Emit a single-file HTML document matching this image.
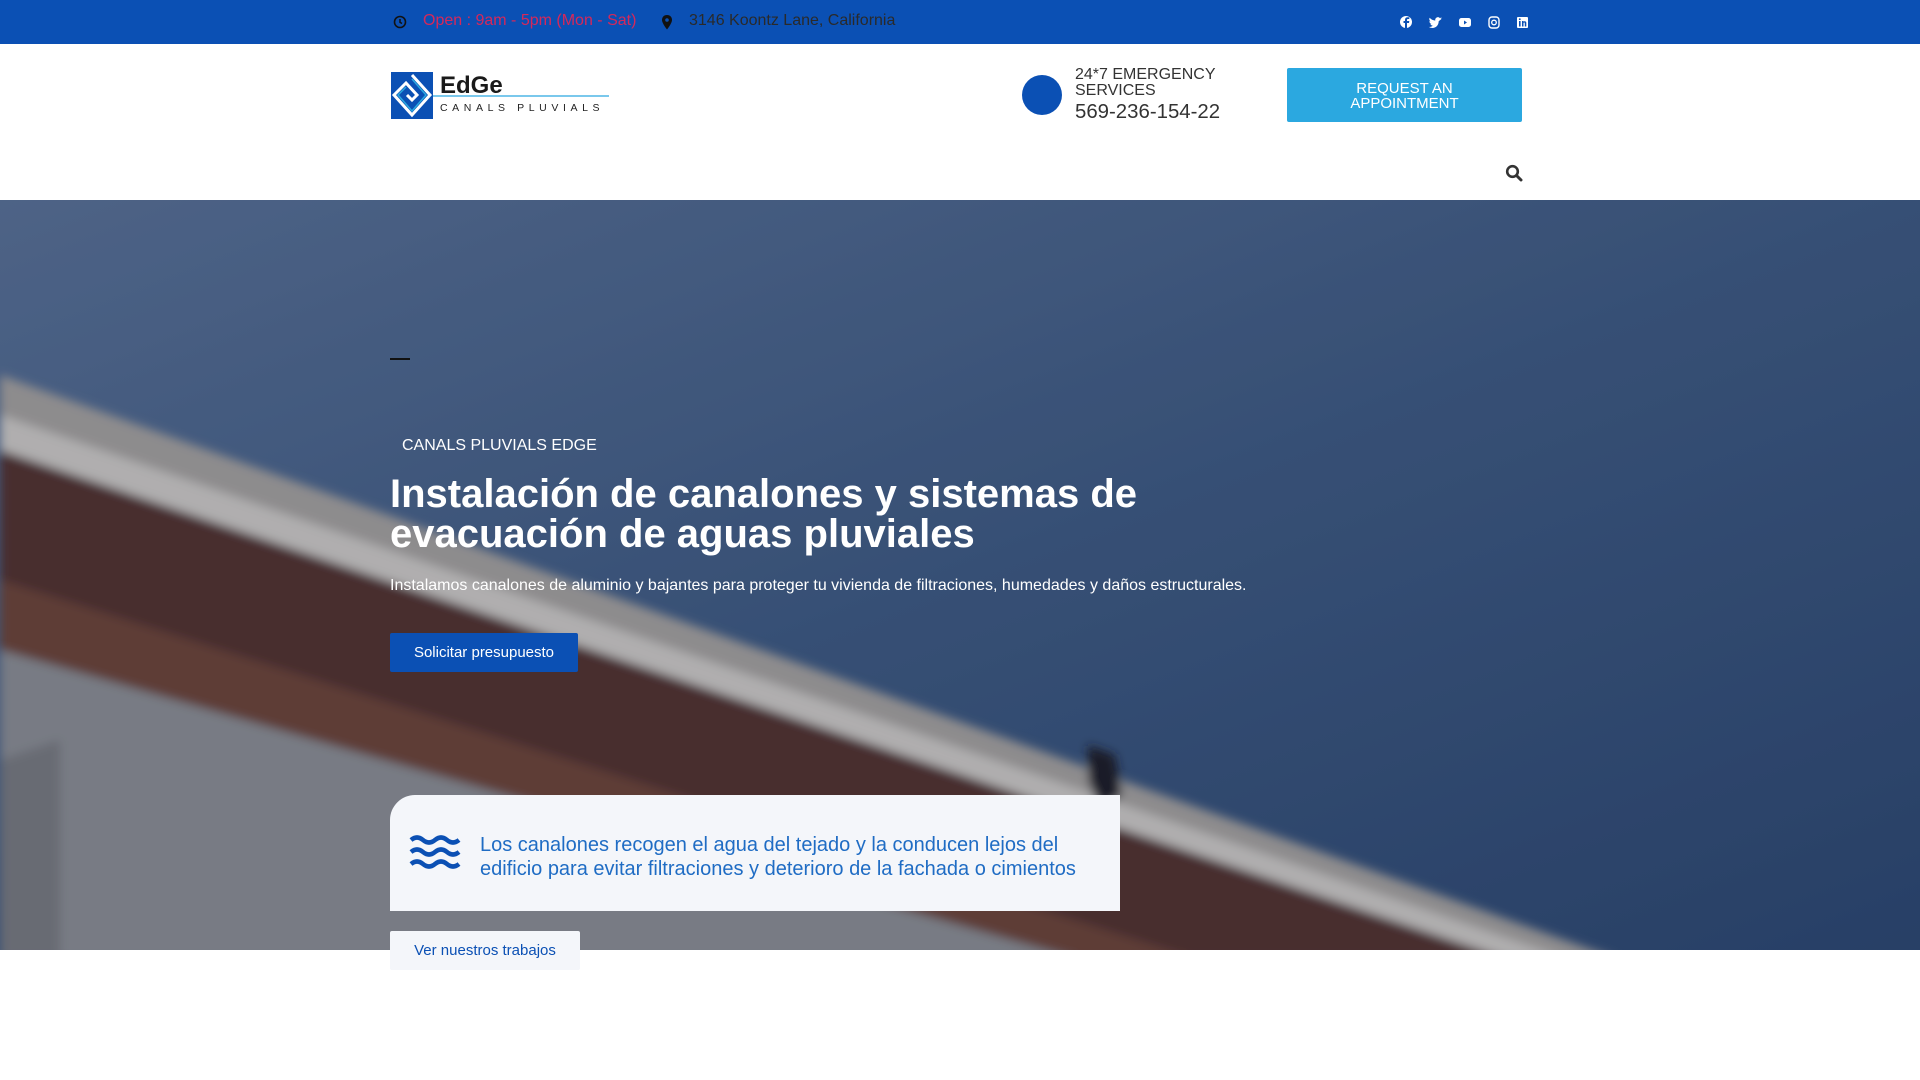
<!DOCTYPE html>
<html><head><meta charset="utf-8"><style>
*{margin:0;padding:0;box-sizing:border-box}
body{width:1920px;height:1080px;overflow:hidden;background:#fff;font-family:"Liberation Sans",sans-serif;position:relative}
.a{position:absolute;white-space:nowrap}
</style></head><body>
<div class="a" style="left:0;top:0;width:1920px;height:44px;background:#0b50b4"></div>
<svg class="a" style="left:393px;top:15px" width="14" height="14" viewBox="0 0 14 14"><circle cx="7" cy="7" r="5.5" fill="none" stroke="#111" stroke-width="1.6"/><path d="M7 4v3.3l2 1.2" fill="none" stroke="#111" stroke-width="1.5"/></svg>
<div class="a" style="left:423px;top:12px;font-size:16px;color:#d6285a">Open : 9am - 5pm (Mon - Sat)</div>
<svg class="a" style="left:661px;top:15px" width="12" height="15" viewBox="0 0 12 15"><path d="M6 0C2.7 0 1 2.4 1 5c0 3.3 5 9.5 5 9.5S11 8.3 11 5C11 2.4 9.3 0 6 0z" fill="#111"/><circle cx="6" cy="5" r="1.8" fill="#0b50b4"/></svg>
<div class="a" style="left:689px;top:12px;font-size:16px;color:#2a2a2a">3146 Koontz Lane, California</div>
<svg class="a" style="left:1400px;top:15px" width="140" height="14" viewBox="0 0 140 14">
<circle cx="6" cy="7" r="6" fill="#fff"/><path d="M7 14V8h2l.3-2H7V5c0-.6.2-1 1-1h1.3V2.2H7.6C6 2.2 5 3.1 5 4.8V6H3.5v2H5v6z" fill="#0b50b4"/>
<g transform="translate(12,0)"><path d="M30 3.5c-.5.2-1 .4-1.6.4.6-.3 1-.9 1.2-1.5-.5.3-1.1.5-1.7.7a2.7 2.7 0 0 0-4.6 2.5c-2.3-.1-4.3-1.2-5.6-2.8-.8 1.3-.3 2.8.8 3.6-.4 0-.9-.1-1.200-.3 0 1.3.9 2.4 2.2 2.7-.4.1-.8.1-1.2 0 .3 1.1 1.4 1.900 2.5 1.9-1.1.9-2.6 1.4-4 1.2 4 2.6 9.8.5 9.9-5.6z" fill="#fff"/></g>
<g transform="translate(8,0)"><rect x="51" y="3" width="12" height="9" rx="2.5" fill="#fff"/><path d="M56 5.5v4l3-2z" fill="#0b50b4"/></g>
<g transform="translate(13,0)"><rect x="76" y="2" width="10" height="11" rx="3" fill="none" stroke="#fff" stroke-width="1.4"/><circle cx="81" cy="7.5" r="2.3" fill="none" stroke="#fff" stroke-width="1.3"/></g>
<g transform="translate(18,0)"><rect x="99" y="2" width="11" height="11" rx="1" fill="#fff"/><path d="M101 6h1.6v5.5H101zM104 6h1.5v.8c.5-.8 2.8-1.1 2.8 1v3.7h-1.5V8.3c0-1-1.3-1-1.3 0v3.2H104z" fill="#0b50b4"/><circle cx="101.8" cy="4.2" r=".9" fill="#0b50b4"/></g>
</svg>
<!-- logo -->
<svg class="a" style="left:391px;top:71px" width="220" height="50" viewBox="0 0 220 50">
<rect x="0" y="1" width="42" height="47" fill="#0b50b4"/>
<path d="M21 4L39 24L21 44L3 24L15 12L26 24L21 29L16 24" fill="none" stroke="#fff" stroke-width="3"/>
<path d="M21 8L35 24L21 40L7 24L15 16" fill="none" stroke="#2ba8e0" stroke-width="1.5"/>
<text x="49" y="22" font-family="Liberation Sans" font-weight="bold" font-size="24" fill="#1a1a1a">EdGe</text>
<line x1="42" y1="25" x2="218" y2="25" stroke="#2ba8e0" stroke-width="1.2"/>
<text x="49" y="40" font-family="Liberation Sans" font-size="10.5" letter-spacing="4.6" fill="#222">CANALS PLUVIALS</text>
</svg>
<div class="a" style="left:1022px;top:75px;width:40px;height:40px;border-radius:50%;background:#0b50b4"></div>
<div class="a" style="left:1075px;top:67px;font-size:16px;line-height:16px;color:#333">24*7 EMERGENCY<br>SERVICES</div>
<div class="a" style="left:1075px;top:101px;font-size:20.4px;color:#333">569-236-154-22</div>
<div class="a" style="left:1287px;top:68px;width:235px;height:54px;background:#2ba8e0;border-radius:2px;color:#fff;font-size:15px;line-height:15px;text-align:center;padding-top:13px">REQUEST AN<br>APPOINTMENT</div>
<svg class="a" style="left:1505px;top:164px" width="18" height="18" viewBox="0 0 18 18"><circle cx="7.5" cy="7.5" r="5.3" fill="none" stroke="#333" stroke-width="2.6"/><path d="M11.5 11.5l4.5 4.5" stroke="#333" stroke-width="3" stroke-linecap="round"/></svg>
<!-- hero -->
<svg class="a" style="left:0;top:200px" width="1920" height="750" viewBox="0 0 1920 750">
<defs><linearGradient id="s" x1="0" y1="0" x2="1" y2="1"><stop offset="0" stop-color="#5a7399"/><stop offset="0.5" stop-color="#3e5b84"/><stop offset="1" stop-color="#2c4872"/></linearGradient>
<filter id="b"><feGaussianBlur stdDeviation="5"/></filter></defs>
<rect width="1920" height="750" fill="url(#s)"/>
<g filter="url(#b)">
<polygon points="0,175 1620,760 0,760" fill="#a8a5a2"/>
<polygon points="0,215 1570,760 0,760" fill="#d2cfcb"/>
<polygon points="0,250 1510,760 0,760" fill="#52302d"/>
<polygon points="0,380 1200,760 0,760" fill="#6e4538"/>
<polygon points="0,450 1080,760 0,760" fill="#8e9196"/>
<polygon points="0,560 60,540 60,760 0,760" fill="#7a7d82"/>
<polygon points="1088,545 1115,555 1122,595 1100,610 1088,580" fill="#1a1d25"/>
</g>
<rect width="1920" height="750" fill="rgba(20,30,50,0.18)"/>
</svg>
<div class="a" style="left:390px;top:358px;width:20px;height:2px;background:#111"></div>
<div class="a" style="left:402px;top:437px;font-size:16px;color:#fff">CANALS PLUVIALS EDGE</div>
<div class="a" style="left:390px;top:474px;font-size:40px;line-height:40px;font-weight:bold;color:#fff">Instalación de canalones y sistemas de<br>evacuación de aguas pluviales</div>
<div class="a" style="left:390px;top:577px;font-size:16px;color:#fff">Instalamos canalones de aluminio y bajantes para proteger tu vivienda de filtraciones, humedades y daños estructurales.</div>
<div class="a" style="left:390px;top:633px;width:188px;height:39px;background:#0b50b4;border-radius:2px;color:#fff;font-size:15px;text-align:center;line-height:39px">Solicitar presupuesto</div>
<div class="a" style="left:390px;top:795px;width:730px;height:116px;background:#f4f6fa;border-top-left-radius:25px"></div>
<svg class="a" style="left:409px;top:835px" width="52" height="36" viewBox="0 0 52 36">
<g fill="none" stroke="#0b50b4" stroke-width="4.5"><path d="M2 5q6-5 12 0t12 0 12 0 12 0"/><path d="M2 17q6-5 12 0t12 0 12 0 12 0"/><path d="M2 29q6-5 12 0t12 0 12 0 12 0"/></g></svg>
<div class="a" style="left:480px;top:833px;font-size:20px;line-height:24px;color:#1f6cc4">Los canalones recogen el agua del tejado y la conducen lejos del<br>edificio para evitar filtraciones y deterioro de la fachada o cimientos</div>
<div class="a" style="left:390px;top:931px;width:190px;height:39px;background:#f4f6fa;border-radius:2px;color:#0b50b4;font-size:15px;text-align:center;line-height:39px">Ver nuestros trabajos</div>
</body></html>
